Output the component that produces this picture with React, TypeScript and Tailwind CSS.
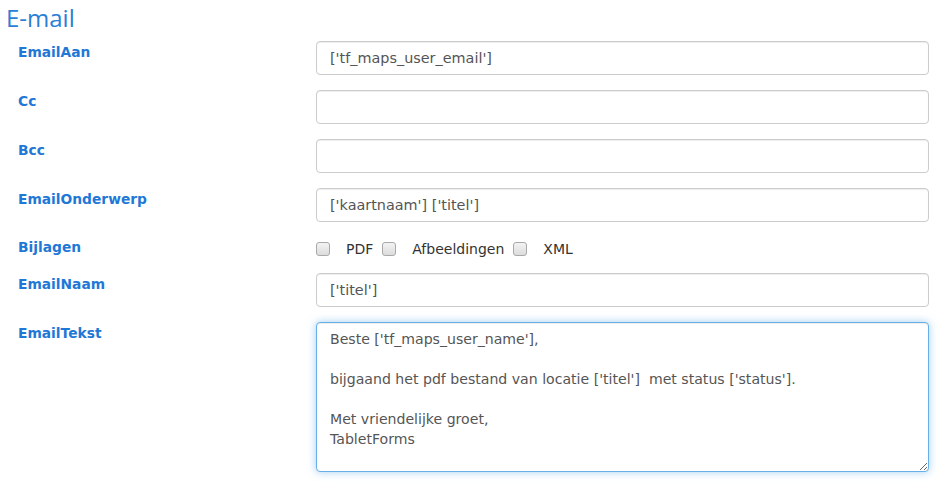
import { useState } from 'react';

const labelCls =
  "w-[316px] shrink-0 pl-[18px] text-[13.8px] font-bold text-[#1f78d6] font-['DejaVu_Sans',Verdana,sans-serif]";
const inputCls =
  "h-[34px] w-[613px] rounded-[4px] border border-[#cccccc] bg-white px-[13px] text-[14.4px] text-[#555555] font-['DejaVu_Sans',Verdana,sans-serif] shadow-[inset_0_1px_1px_rgba(0,0,0,0.075)] outline-none";

function Row({ label, value }: { label: string; value: string }) {
  return (
    <div className="flex items-start">
      <div className={`${labelCls} pt-[1px]`}>{label}</div>
      <input className={inputCls} defaultValue={value} />
    </div>
  );
}

function Check({ label }: { label: string }) {
  return (
    <label className="flex items-center">
      <span className="h-[14px] w-[14px] rounded-[3px] border border-[#a9a9a9] bg-gradient-to-b from-[#f3f3f3] to-[#dcdcdc]" />
      <span className="ml-[16px] mr-[9px] text-[14px] text-[#333333] font-['DejaVu_Sans',Verdana,sans-serif]">
        {label}
      </span>
    </label>
  );
}

const bodyText = `Beste ['tf_maps_user_name'],

bijgaand het pdf bestand van locatie ['titel']  met status ['status'].

Met vriendelijke groet,
TabletForms`;

export default function App() {
  const [text, setText] = useState(bodyText);
  return (
    <div className="min-h-[484px] w-[945px] bg-white">
      <h1 className="pl-[6px] pt-[2px] text-[24px] leading-[32px] text-[#2b7fd6] font-['Open_Sans',sans-serif]">
        E-mail
      </h1>
      <div className="mt-[7px] flex flex-col gap-[15px]">
        <Row label="EmailAan" value="['tf_maps_user_email']" />
        <Row label="Cc" value="" />
        <Row label="Bcc" value="" />
        <Row label="EmailOnderwerp" value="['kaartnaam'] ['titel']" />
        <div className="flex h-[21px] items-center">
          <div className={labelCls}>Bijlagen</div>
          <div className="flex items-center pt-[3px]">
            <Check label="PDF" />
            <Check label="Afbeeldingen" />
            <Check label="XML" />
          </div>
        </div>
        <Row label="EmailNaam" value="['titel']" />
        <div className="flex items-start">
          <div className={`${labelCls} pt-[1px]`}>EmailTekst</div>
          <textarea
            className="h-[150px] w-[613px] rounded-[4px] border border-[#66afe9] bg-white px-[13px] py-[6px] text-[14.1px] leading-[20px] text-[#555555] font-['DejaVu_Sans',Verdana,sans-serif] shadow-[inset_0_1px_1px_rgba(0,0,0,0.075),0_0_8px_rgba(102,175,233,0.6)] outline-none"
            value={text}
            onChange={(e) => setText(e.target.value)}
          />
        </div>
      </div>
    </div>
  );
}
